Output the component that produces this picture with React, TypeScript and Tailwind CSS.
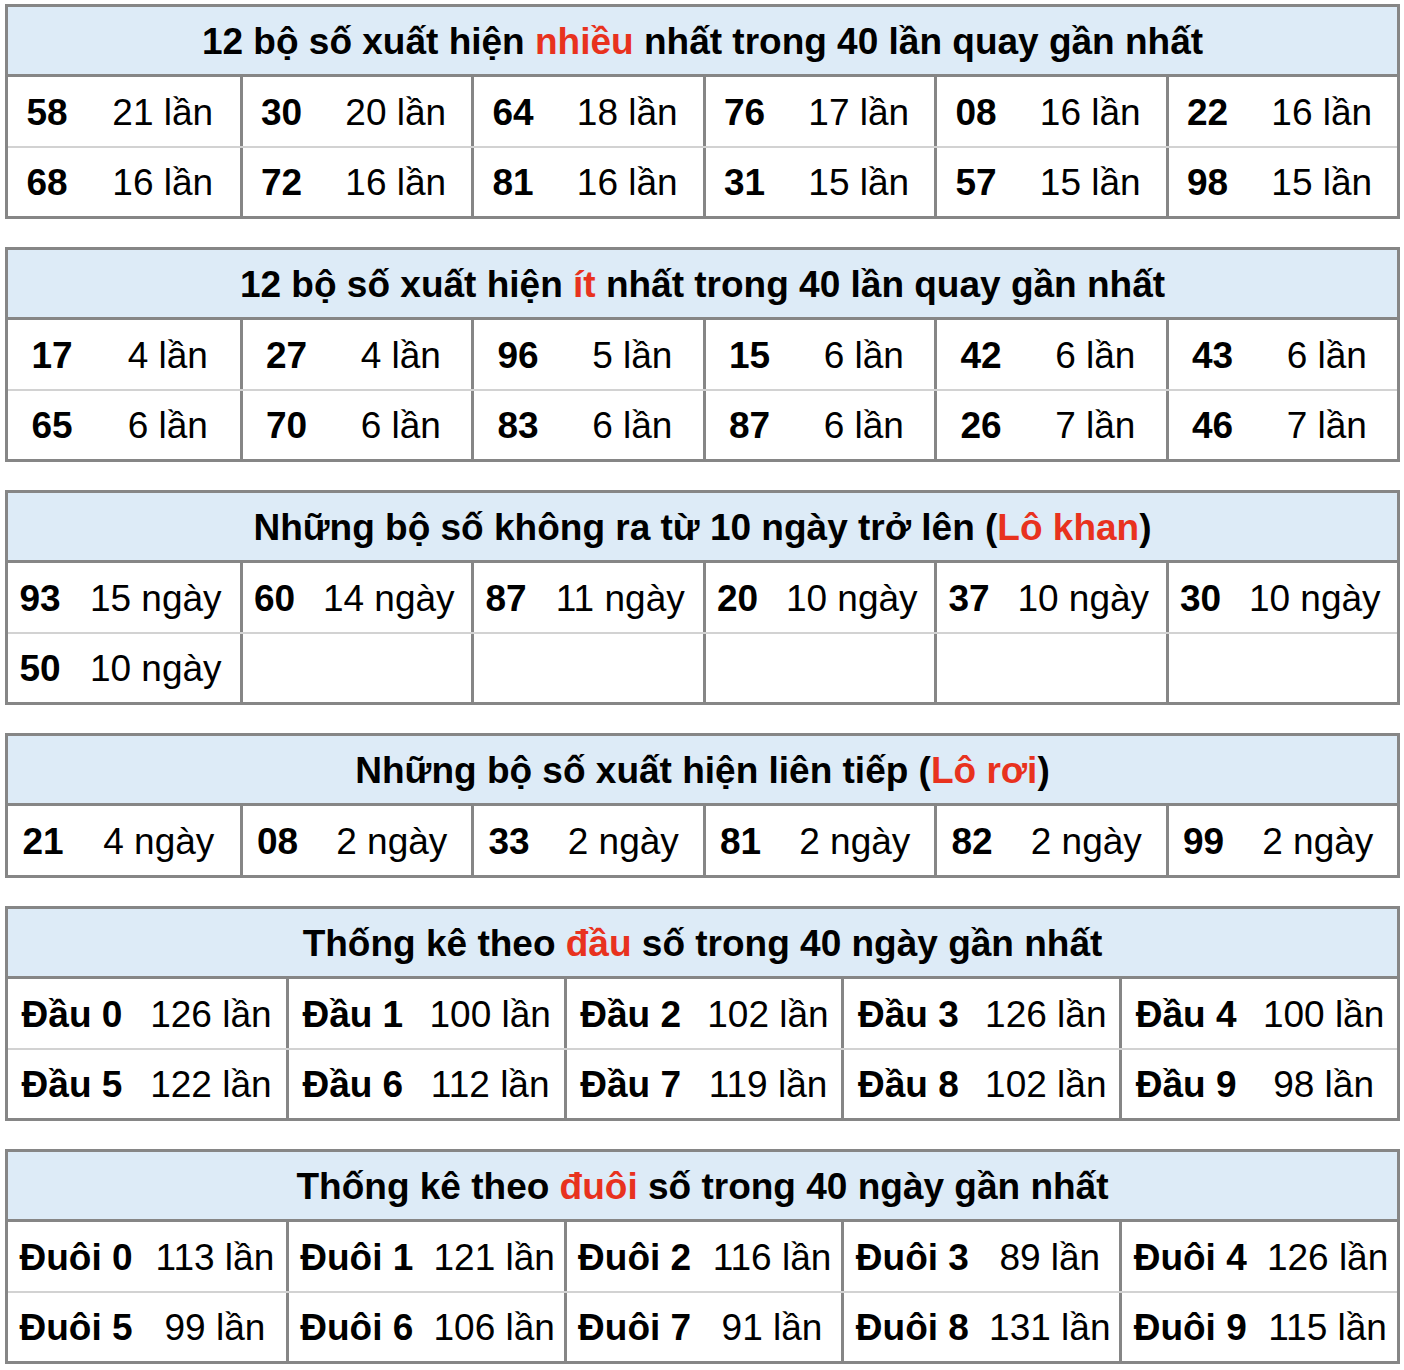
import React from "react";

type Cell = [string, string] | null;

interface StatTableProps {
  title: React.ReactNode;
  cols: 5 | 6;
  numW: string;
  rows: Cell[][];
}

const Red = ({ children }: { children: React.ReactNode }) => (
  <span className="text-[#e8321e]">{children}</span>
);

function StatTable({ title, cols, numW, rows }: StatTableProps) {
  return (
    <div className="border-[3px] border-[#868686]">
      <div className="h-[70px] bg-[#ddebf7] border-b-[3px] border-[#868686] flex items-center justify-center font-bold text-[37px] leading-none pt-[1px]">
        {title}
      </div>
      {rows.map((row, ri) => (
        <div
          key={ri}
          className={`grid ${cols === 6 ? "grid-cols-6" : "grid-cols-5"} ${ri > 0 ? "border-t-2 border-[#d2d2d2]" : ""}`}
        >
          {row.map((cell, ci) => (
            <div
              key={ci}
              className={`${ri === 0 ? "h-[69px] pt-[2px]" : "h-[68px]"} flex items-center text-[37px] leading-none ${ci > 0 ? "border-l-[3px] border-[#868686]" : ""}`}
            >
              {cell && (
                <>
                  <div className={`${numW} shrink-0 text-center font-bold`}>{cell[0]}</div>
                  <div className="flex-1 text-center">{cell[1]}</div>
                </>
              )}
            </div>
          ))}
        </div>
      ))}
    </div>
  );
}

const most: Cell[][] = [
  [["58", "21 lần"], ["30", "20 lần"], ["64", "18 lần"], ["76", "17 lần"], ["08", "16 lần"], ["22", "16 lần"]],
  [["68", "16 lần"], ["72", "16 lần"], ["81", "16 lần"], ["31", "15 lần"], ["57", "15 lần"], ["98", "15 lần"]],
];

const least: Cell[][] = [
  [["17", "4 lần"], ["27", "4 lần"], ["96", "5 lần"], ["15", "6 lần"], ["42", "6 lần"], ["43", "6 lần"]],
  [["65", "6 lần"], ["70", "6 lần"], ["83", "6 lần"], ["87", "6 lần"], ["26", "7 lần"], ["46", "7 lần"]],
];

const khan: Cell[][] = [
  [["93", "15 ngày"], ["60", "14 ngày"], ["87", "11 ngày"], ["20", "10 ngày"], ["37", "10 ngày"], ["30", "10 ngày"]],
  [["50", "10 ngày"], null, null, null, null, null],
];

const roi: Cell[][] = [
  [["21", "4 ngày"], ["08", "2 ngày"], ["33", "2 ngày"], ["81", "2 ngày"], ["82", "2 ngày"], ["99", "2 ngày"]],
];

const dau: Cell[][] = [
  [["Đầu 0", "126 lần"], ["Đầu 1", "100 lần"], ["Đầu 2", "102 lần"], ["Đầu 3", "126 lần"], ["Đầu 4", "100 lần"]],
  [["Đầu 5", "122 lần"], ["Đầu 6", "112 lần"], ["Đầu 7", "119 lần"], ["Đầu 8", "102 lần"], ["Đầu 9", "98 lần"]],
];

const duoi: Cell[][] = [
  [["Đuôi 0", "113 lần"], ["Đuôi 1", "121 lần"], ["Đuôi 2", "116 lần"], ["Đuôi 3", "89 lần"], ["Đuôi 4", "126 lần"]],
  [["Đuôi 5", "99 lần"], ["Đuôi 6", "106 lần"], ["Đuôi 7", "91 lần"], ["Đuôi 8", "131 lần"], ["Đuôi 9", "115 lần"]],
];

export default function App() {
  return (
    <div
      className="bg-white text-black pt-[4px] pl-[5px] w-[1404px] min-h-[1370px]"
      style={{ fontFamily: '"Liberation Sans", Arial, Helvetica, sans-serif' }}
    >
      <div className="w-[1395px] flex flex-col gap-[28px]">
        <StatTable
          cols={6}
          numW="w-[78px]"
          rows={most}
          title={<span>12 bộ số xuất hiện <Red>nhiều</Red> nhất trong 40 lần quay gần nhất</span>}
        />
        <StatTable
          cols={6}
          numW="w-[88px]"
          rows={least}
          title={<span>12 bộ số xuất hiện <Red>ít</Red> nhất trong 40 lần quay gần nhất</span>}
        />
        <StatTable
          cols={6}
          numW="w-[64px]"
          rows={khan}
          title={<span>Những bộ số không ra từ 10 ngày trở lên (<Red>Lô khan</Red>)</span>}
        />
        <StatTable
          cols={6}
          numW="w-[70px]"
          rows={roi}
          title={<span>Những bộ số xuất hiện liên tiếp (<Red>Lô rơi</Red>)</span>}
        />
        <StatTable
          cols={5}
          numW="w-[128px]"
          rows={dau}
          title={<span>Thống kê theo <Red>đầu</Red> số trong 40 ngày gần nhất</span>}
        />
        <StatTable
          cols={5}
          numW="w-[136px]"
          rows={duoi}
          title={<span>Thống kê theo <Red>đuôi</Red> số trong 40 ngày gần nhất</span>}
        />
      </div>
    </div>
  );
}
